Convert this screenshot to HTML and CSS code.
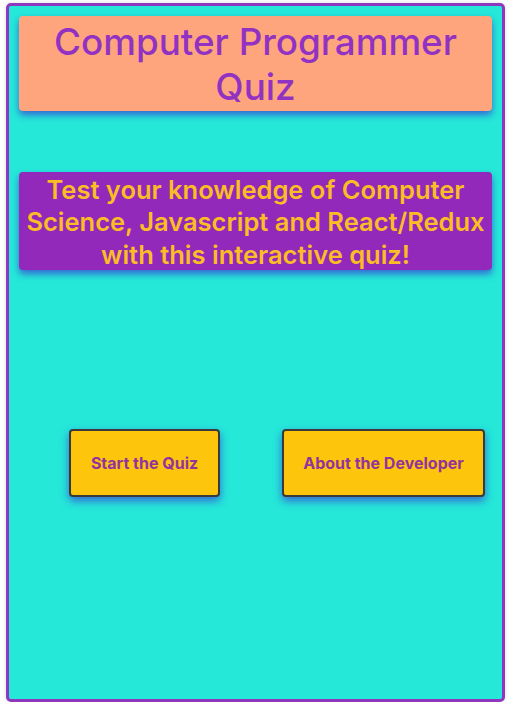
FILE: index.html
```html
<!DOCTYPE html>
<html>
<head>
<meta charset="utf-8">
<link rel="stylesheet" href="styles.css">
</head>
<body>
<div class="app">
  <header class="title-card">
    <h1 class="title">Computer Programmer Quiz</h1>
  </header>
  <section class="intro-card">
    <p class="intro">Test your knowledge of Computer Science, Javascript and React/Redux with this interactive quiz!</p>
  </section>
  <div class="actions">
    <button class="btn btn-start">Start the Quiz</button>
    <button class="btn btn-about">About the Developer</button>
  </div>
</div>
</body>
</html>
```
FILE: styles.css
```css
html, body {
  margin: 0;
  padding: 0;
  background: #ffffff;
}
body {
  padding: 3px 6px 0 6px;
  font-family: Inter, "Noto Sans", "Liberation Sans", sans-serif;
}
.app {
  box-sizing: border-box;
  width: 499px;
  height: 699px;
  background: #25e8d9;
  border: 3px solid #8e38c0;
  border-radius: 5px;
  box-shadow: 0 0 4px rgba(0,0,0,0.15);
  padding: 10px 10px 0 10px;
  display: flex;
  flex-direction: column;
}
.title-card {
  background: #fea57e;
  border-radius: 4px;
  height: 95px;
  display: flex;
  align-items: center;
  justify-content: center;
  box-shadow: 0 4px 7px rgba(60, 50, 210, 0.7);
}
.title {
  margin: 0;
  color: #9232c2;
  font-size: 36.8px;
  font-weight: 500;
  line-height: 45px;
  text-align: center;
  padding: 0 20px;
}
.intro-card {
  margin-top: 61px;
  background: #9229ba;
  border-radius: 4px;
  height: 98px;
  display: flex;
  align-items: center;
  justify-content: center;
  box-shadow: 0 4px 7px rgba(60, 50, 210, 0.7);
}
.intro {
  margin: 0;
  color: #fbbd25;
  font-size: 25.5px;
  font-weight: 600;
  line-height: 32.5px;
  text-align: center;
  padding-top: 3px;
}
.actions {
  margin-top: 159px;
  display: flex;
  padding-left: 50px;
  gap: 62px;
}
.btn {
  box-sizing: border-box;
  height: 68px;
  background: #fdc50c;
  border: 2px solid #3a3a3a;
  border-radius: 4px;
  color: #93339f;
  font-family: Inter, "Noto Sans", "Liberation Sans", sans-serif;
  font-size: 16px;
  font-weight: 700;
  box-shadow: 0 4px 8px rgba(60, 50, 210, 0.7);
  padding: 0;
}
.btn-start { width: 151px; }
.btn-about { width: 203px; }
```
